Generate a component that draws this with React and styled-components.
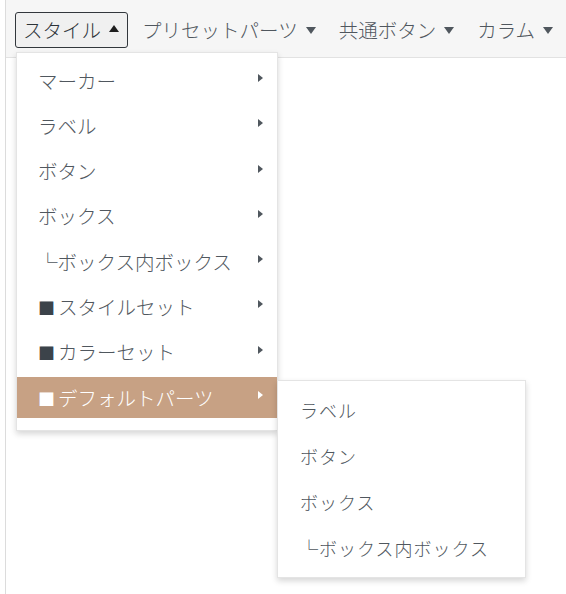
import React from 'react';
import styled, { createGlobalStyle } from 'styled-components';

const GlobalStyle = createGlobalStyle`
  html, body {
    margin: 0;
    padding: 0;
    background: #ffffff;
  }
  body {
    font-family: "Noto Sans CJK JP", "Noto Sans", sans-serif;
    font-weight: 300;
  }
`;

const styleItems = [
  { label: 'マーカー' },
  { label: 'ラベル' },
  { label: 'ボタン' },
  { label: 'ボックス' },
  { label: '└ボックス内ボックス' },
  { label: 'スタイルセット', square: true },
  { label: 'カラーセット', square: true },
  { label: 'デフォルトパーツ', square: true, active: true },
];

const defaultParts = ['ラベル', 'ボタン', 'ボックス', '└ボックス内ボックス'];

function App() {
  return (
    <>
      <GlobalStyle />
      <Page>
        <Editor>
          <Toolbar>
            <Anchor>
              <ToolItem open>
                スタイル
                <Caret up />
              </ToolItem>
              <Menu>
                {styleItems.map((item) => (
                  <MenuItem key={item.label} active={item.active}>
                    <span>
                      {item.square && <Square active={item.active}>■</Square>}
                      {item.label}
                    </span>
                    <Arrow active={item.active} />
                    {item.active && (
                      <SubMenu>
                        {defaultParts.map((p) => (
                          <SubItem key={p}>{p}</SubItem>
                        ))}
                      </SubMenu>
                    )}
                  </MenuItem>
                ))}
              </Menu>
            </Anchor>
            <ToolItem>
              プリセットパーツ
              <Caret />
            </ToolItem>
            <ToolItem>
              共通ボタン
              <Caret />
            </ToolItem>
            <ToolItem>
              カラム
              <Caret />
            </ToolItem>
          </Toolbar>
          <Body />
        </Editor>
      </Page>
    </>
  );
}

const Page = styled.div`
  padding-left: 5px;
  height: 594px;
  box-sizing: border-box;
  overflow: hidden;
`;

const Editor = styled.div`
  border-left: 1px solid #dcdcdc;
  height: 100%;
`;

const Toolbar = styled.div`
  display: flex;
  align-items: center;
  gap: 6px;
  height: 58px;
  box-sizing: border-box;
  padding: 2px 0 0 9px;
  background: #f6f6f6;
  border-bottom: 1px solid #e2e2e2;
`;

const Body = styled.div`
  background: #ffffff;
`;

const Anchor = styled.div`
  position: relative;
`;

const ToolItem = styled.div`
  display: flex;
  align-items: center;
  height: 36px;
  box-sizing: border-box;
  padding: 0 8px 0 7px;
  border: 1px solid ${(p) => (p.open ? '#32373c' : 'transparent')};
  border-radius: 3px;
  background: ${(p) => (p.open ? '#f0f0f0' : 'transparent')};
  color: ${(p) => (p.open ? '#2c3338' : '#50575e')};
  font-size: 19.5px;
  line-height: 1;
  white-space: nowrap;
`;

const Caret = styled.span`
  margin-left: 8px;
  width: 0;
  height: 0;
  border-left: 5px solid transparent;
  border-right: 5px solid transparent;
  ${(p) =>
    p.up
      ? 'border-bottom: 7px solid #1e1e1e; margin-top: -2px;'
      : 'border-top: 7px solid #50575e; margin-top: 2px;'}
`;

const Menu = styled.ul`
  position: absolute;
  top: calc(100% + 4px);
  left: 1px;
  z-index: 10;
  width: 262px;
  box-sizing: border-box;
  margin: 0;
  padding: 7px 0 12px;
  list-style: none;
  display: flex;
  flex-direction: column;
  gap: 4.3px;
  background: #ffffff;
  border: 1px solid #e4e4e4;
  box-shadow: 0 3px 6px rgba(0, 0, 0, 0.16);
`;

const MenuItem = styled.li`
  position: relative;
  display: flex;
  align-items: center;
  justify-content: space-between;
  height: 41px;
  padding: 0 14px 0 21px;
  background: ${(p) => (p.active ? '#c7a184' : 'transparent')};
  color: ${(p) => (p.active ? '#ffffff' : '#50575e')};
  font-size: 19.5px;
  white-space: nowrap;
`;

const Square = styled.span`
  display: inline-block;
  margin-right: 3px;
  font-size: 17px;
  color: ${(p) => (p.active ? '#ffffff' : '#3c434a')};
`;

const Arrow = styled.span`
  width: 0;
  height: 0;
  margin-top: -4px;
  border-top: 4.5px solid transparent;
  border-bottom: 4.5px solid transparent;
  border-left: 5px solid ${(p) => (p.active ? '#ffffff' : '#50575e')};
`;

const SubMenu = styled.ul`
  position: absolute;
  top: 3px;
  left: 100%;
  z-index: 11;
  width: 249px;
  box-sizing: border-box;
  margin: 0;
  padding: 6px 0;
  list-style: none;
  background: #ffffff;
  border: 1px solid #e4e4e4;
  box-shadow: 0 3px 6px rgba(0, 0, 0, 0.16);
`;

const SubItem = styled.li`
  display: flex;
  align-items: center;
  height: 46px;
  padding-left: 22px;
  color: #50575e;
  font-size: 18px;
  letter-spacing: 1px;
  white-space: nowrap;
`;

export default App;
